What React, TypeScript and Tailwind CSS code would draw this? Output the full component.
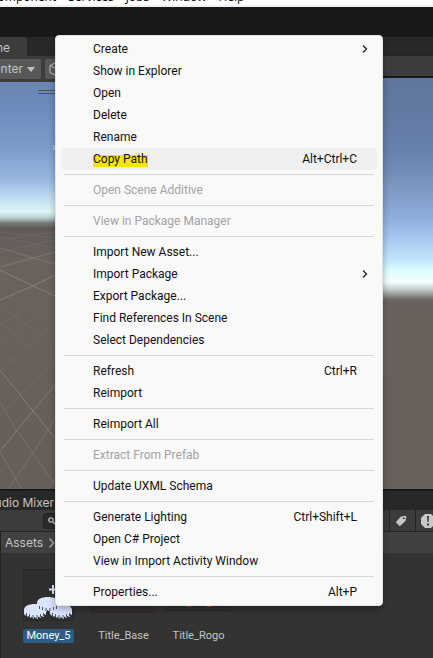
import React from "react";

type Item = { label: string; keys?: string; sub?: boolean; disabled?: boolean; active?: boolean };

const groups: Item[][] = [
  [
    { label: "Create", sub: true },
    { label: "Show in Explorer" },
    { label: "Open" },
    { label: "Delete" },
    { label: "Rename" },
    { label: "Copy Path", keys: "Alt+Ctrl+C", active: true },
  ],
  [{ label: "Open Scene Additive", disabled: true }],
  [{ label: "View in Package Manager", disabled: true }],
  [
    { label: "Import New Asset..." },
    { label: "Import Package", sub: true },
    { label: "Export Package..." },
    { label: "Find References In Scene" },
    { label: "Select Dependencies" },
  ],
  [{ label: "Refresh", keys: "Ctrl+R" }, { label: "Reimport" }],
  [{ label: "Reimport All" }],
  [{ label: "Extract From Prefab", disabled: true }],
  [{ label: "Update UXML Schema" }],
  [
    { label: "Generate Lighting", keys: "Ctrl+Shift+L" },
    { label: "Open C# Project" },
    { label: "View in Import Activity Window" },
  ],
  [{ label: "Properties...", keys: "Alt+P" }],
];

function MenuItem({ item }: { item: Item }) {
  return (
    <li role="none">
      <button
        type="button"
        role="menuitem"
        disabled={item.disabled}
        className={`flex h-[22px] w-full items-center justify-between rounded pl-8 text-left whitespace-nowrap ${
          item.sub ? "pr-2" : "pr-5"
        } ${item.active ? "bg-[#f0f0f0]" : ""} ${item.disabled ? "text-[#a3a3a3]" : "text-[#111111]"}`}
      >
        <span className={item.active ? "bg-[linear-gradient(transparent_4px,#f3e600_4px)]" : ""}>
          {item.label}
        </span>
        {item.keys && <span>{item.keys}</span>}
        {item.sub && (
          <svg className="size-2" viewBox="0 0 8 8" fill="none" stroke="#222" strokeWidth="1.3" aria-hidden="true">
            <path d="M2 0.5 L5.5 4 L2 7.5" />
          </svg>
        )}
      </button>
    </li>
  );
}

function ContextMenu() {
  return (
    <div
      role="menu"
      className="absolute top-[35px] left-[55px] w-[328px] rounded-[4px] border border-[#e4e4e4] bg-[#f9f9f9] px-[5px] py-0.5 font-[Roboto,sans-serif] text-[12px] leading-4 shadow-[0_3px_7px_rgba(0,0,0,0.3)]"
    >
      {groups.map((group, i) => (
        <React.Fragment key={i}>
          {i > 0 && <hr className="mx-[3px] my-1 border-t border-[#d6d6d6]" />}
          <ul role="none">
            {group.map((item) => (
              <MenuItem key={item.label} item={item} />
            ))}
          </ul>
        </React.Fragment>
      ))}
    </div>
  );
}

function SceneView() {
  return (
    <div className="relative h-[407px] overflow-hidden bg-[linear-gradient(#6985b3_0px,#6f8dbd_30px,#7e9dca_68px,#9ab8e0_98px,#c4e0f3_118px,#dcf8f8_130px,#b8cccc_136px,#767c7b_141px,#605a57_146px,#6a625d_180px,#665d58_407px)]">
      <svg className="absolute inset-0" width="55" height="407" viewBox="0 82 55 407" fill="none" stroke="#837f7b" strokeWidth="1" aria-hidden="true">
        <path d="M38 90.500H55M38 93.500H55" stroke="#4d5360" />
        <path d="M53 145l4 5M53 150l4-5" stroke="#d8e3ef" />
        <path d="M0 370L33 411L55 438M0 451L33 411L55 385" />
        <path d="M0 270L33 286L55 296M0 300L33 286L55 275" />
        <path d="M0 248L33 258L55 264M0 267L33 258L55 252" opacity=".7" />
        <path d="M0 402L15 428L33 453L58 489M0 452L22 489M55 418L33 453L8 489M55 478L48 489" opacity=".6" />
        <path d="M0 347L33 382L55 407M0 415L33 382L55 360M0 372L55 322M0 322L55 367M0 345L55 303M0 308L55 342M0 325L55 290M0 237L55 248M0 252L55 240M0 232L55 238M0 240L55 232" opacity=".3" />
      </svg>
    </div>
  );
}

function Thumb({ name, selected, children }: { name: string; selected?: boolean; children: React.ReactNode }) {
  return (
    <figure className="flex w-[75px] flex-col items-center">
      <div className="flex h-[52px] items-end">{children}</div>
      <figcaption className={`mt-2 rounded-[3px] px-[3px] font-[Roboto,sans-serif] text-[11px] leading-[14px] ${selected ? "bg-[#2c5d87] text-white" : "text-[#c4c4c4]"}`}>
        {name}
      </figcaption>
    </figure>
  );
}

function Coins() {
  const coin = (x: number, y: number) => (
    <g transform={`translate(${x} ${y})`}>
      <path d="M0 6C0 2 5 0 11 0S22 2 22 6V11L20 10V13L17 12V14L14 12.500V15L10 13V15L7 12.500V14L4 12V13L2 11V12L0 10Z" fill="#d9e4ff" />
      <path d="M2.500 9v3M5.500 10v3M9 11v3M13 11v3M16.500 10v3M19.500 9v3" stroke="#2d3138" strokeWidth=".8" />
    </g>
  );
  return (
    <svg width="51" height="52" viewBox="0 0 51 52" aria-hidden="true">
      <rect x=".5" y=".5" width="50" height="51" fill="#2e2e2e" stroke="#282828" />
      <path d="M30 16v9M26 20.500h8" stroke="#d9e4ff" strokeWidth="2" />
      {coin(1, 35)}
      {coin(27, 35)}
      {coin(14, 28)}
    </svg>
  );
}

export default function App() {
  return (
    <div className="relative flex min-h-screen flex-col overflow-hidden bg-[#333333] font-[Inter,sans-serif] text-[#c4c4c4]">
      <nav className="flex h-[7px] items-end overflow-hidden border-b-2 border-[#f0f0f0] bg-white font-['Open_Sans',sans-serif] text-[12px] leading-4 text-black">
        <ul className="-ml-[10px] flex gap-3">
          {["Component", "Services", "Jobs", "Window", "Help"].map((m) => (
            <li key={m}>{m}</li>
          ))}
        </ul>
      </nav>
      <div className="h-[30px] bg-[#191919]" />
      <div className="flex">
        <section className="flex-1">
          <div className="flex h-[19px] bg-[#282828]">
            <h2 className="flex w-[27px] items-center justify-end overflow-hidden rounded-tr-[3px] bg-[#3c3c3c] pt-0.5 pr-[17px] text-[12px]">
              <span>Scene</span>
            </h2>
          </div>
          <div className="flex h-[26px] items-center gap-1 bg-[#3c3c3c]">
            <button type="button" className="flex h-5 w-[41px] items-center justify-end gap-1 overflow-hidden rounded-r-[2px] bg-[#585858] pr-[6px] text-[12px]">
              <span>Center</span>
              <svg className="h-[5px] w-2 shrink-0" viewBox="0 0 8 5" fill="#c4c4c4" aria-hidden="true">
                <path d="M0 0h8L4 5z" />
              </svg>
            </button>
            <button type="button" aria-label="Pivot rotation" className="flex h-5 w-8 items-center rounded-[2px] bg-[#585858] pl-1">
              <svg width="14" height="14" viewBox="0 0 14 14" fill="none" stroke="#c4c4c4" aria-hidden="true">
                <path d="M7 .5L13 3.500V10.500L7 13.500L1 10.500V3.500ZM1 3.500L7 6.500L13 3.500M7 6.500V13.500" />
              </svg>
            </button>
          </div>
          <SceneView />
        </section>
        <section className="flex-1">
          <div className="h-[19px] border-b border-[#232323] bg-[#282828]" />
          <div className="h-[22px] border-b-2 border-[#191919] bg-[#3c3c3c]" />
          <div className="h-[411px] bg-[linear-gradient(#60769d_0px,#6279a2_32px,#6781ad_72px,#7892bb_102px,#92b0de_142px,#a8caf0_162px,#c2e6fb_182px,#dcfbfd_192px,#f4ffff_204px,#c5d0cd_211px,#716c6a_221px,#6a615d_225px,#6a605a_411px)]" />
        </section>
      </div>
      <section className="border-t-2 border-[#191919]">
        <div className="flex h-[19px] items-center bg-[#282828] pt-1">
          <h2 className="flex w-[54px] justify-end text-[12px] whitespace-nowrap">Audio Mixer</h2>
        </div>
        <div className="flex h-[22px] items-center justify-between border-b border-[#232323] bg-[#3c3c3c] pl-[43px]">
          <label className="flex h-4 w-40 items-center rounded-[3px] border border-[#202020] bg-[#2a2a2a] pl-1">
            <svg width="8" height="8" viewBox="0 0 8 8" fill="none" stroke="#c4c4c4" strokeWidth="1.200" aria-hidden="true">
              <circle cx="3" cy="3" r="2.200" />
              <path d="M4.600 4.600L7.500 7.500" />
            </svg>
            <input type="search" aria-label="Search assets" className="min-w-0 flex-1 bg-transparent" />
          </label>
          <div className="flex h-full">
            <button type="button" aria-label="Search by label" className="flex w-[26px] items-center justify-center border-l border-[#232323]">
              <svg width="12" height="12" viewBox="0 0 12 12" className="mr-1" aria-hidden="true">
                <path d="M6 1.500L10.500 .8L11.300 1.600L10.500 6L4.800 11.200L.8 7.200Z" fill="#c9c9c9" />
                <circle cx="8.800" cy="3.200" r="1" fill="#3c3c3c" />
              </svg>
            </button>
            <button type="button" aria-label="Search by log type" className="flex w-[18px] items-center overflow-hidden border-l border-[#232323] pl-[5px]">
              <svg width="14" height="14" viewBox="0 0 14 14" className="shrink-0" aria-hidden="true">
                <path d="M4 0h6l4 4v6l-4 4H4l-4-4V4Z" fill="#c9c9c9" />
                <path d="M6 2h2l-.4 6H6.400ZM6 9.500h2v2H6Z" fill="#3c3c3c" />
              </svg>
            </button>
          </div>
        </div>
        <div className="flex h-[21px] items-center gap-[6px] border-l border-[#232323] bg-[#414141] pl-1 text-[12px]">
          <a href="#assets">Assets</a>
          <svg width="6" height="10" viewBox="0 0 6 10" fill="none" stroke="#999" strokeWidth="1.800" aria-hidden="true">
            <path d="M.5 .5l4 4.500l-4 4.500" />
          </svg>
        </div>
        <div className="flex min-h-[105px] border-l border-[#232323] pt-4 pl-[10px]">
          <Thumb name="Money_5" selected>
            <Coins />
          </Thumb>
          <Thumb name="Title_Base">
            <div className="mb-2 h-9 w-[65px] border border-[#292929] bg-[#332e2b]" />
          </Thumb>
          <Thumb name="Title_Rogo">
            <div className="mb-[10px] flex h-9 w-[65px] items-end justify-center gap-4 border border-[#292929] bg-[#303030] pb-[3px]">
              <span className="h-1 w-1 bg-[#a8431f]" />
              <span className="h-1 w-1 bg-[#a8431f]" />
            </div>
          </Thumb>
        </div>
      </section>
      <ContextMenu />
    </div>
  );
}
